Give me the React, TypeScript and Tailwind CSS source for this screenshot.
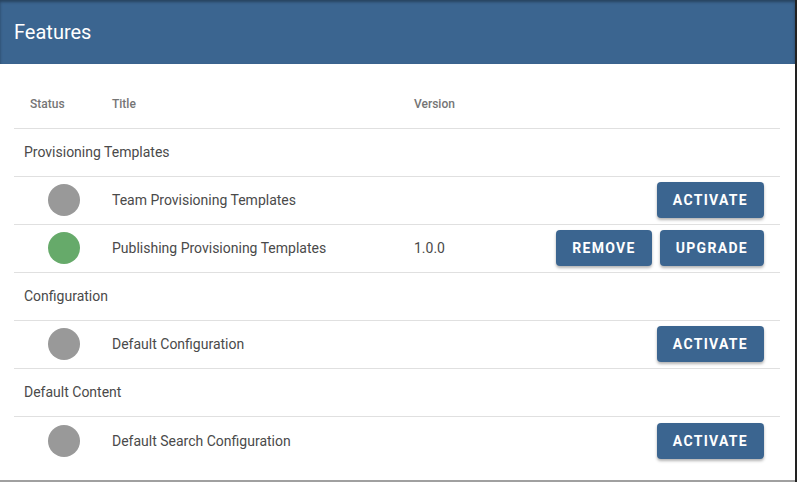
import React from 'react';

type Feature = {
  title: string;
  active: boolean;
  version?: string;
  actions: string[];
};

type Group = {
  name: string;
  features: Feature[];
};

const groups: Group[] = [
  {
    name: 'Provisioning Templates',
    features: [
      { title: 'Team Provisioning Templates', active: false, actions: ['Activate'] },
      { title: 'Publishing Provisioning Templates', active: true, version: '1.0.0', actions: ['Remove', 'Upgrade'] },
    ],
  },
  {
    name: 'Configuration',
    features: [{ title: 'Default Configuration', active: false, actions: ['Activate'] }],
  },
  {
    name: 'Default Content',
    features: [{ title: 'Default Search Configuration', active: false, actions: ['Activate'] }],
  },
];

const Button: React.FC<{ label: string }> = ({ label }) => (
  <button className="h-9 px-4 rounded bg-[#3b6590] text-white text-sm font-bold uppercase tracking-[1.3px] shadow-[0_2px_3px_rgba(0,0,0,0.3)]">
    {label}
  </button>
);

const App: React.FC = () => {
  return (
    <div className="w-[797px] h-[482px] bg-white border-r-2 border-[#222] font-['Roboto',sans-serif] overflow-hidden">
      {/* Header bar */}
      <div className="h-16 bg-[#3b6590] flex items-center px-[14px] shadow-[inset_0_2px_3px_rgba(0,0,0,0.35)]">
        <h1 className="text-white text-xl">Features</h1>
      </div>

      {/* Table */}
      <div className="pt-[17px] pb-4 px-[14px] border-b-2 border-[#a0a0a0]">
        <div className="w-[766px]">
          <div className="h-12 pb-px flex items-center border-b border-[#e0e0e0] text-xs font-medium text-[#757575]">
            <div className="w-[82px] pl-4">Status</div>
            <div className="w-[302px] pl-4">Title</div>
            <div className="pl-4">Version</div>
          </div>

          {groups.map((group, gi) => (
            <React.Fragment key={group.name}>
              <div className="h-12 pb-px flex items-center border-b border-[#e0e0e0] pl-[10px] text-sm text-[#4a4a4a]">
                {group.name}
              </div>
              {group.features.map((f, fi) => {
                const last = gi === groups.length - 1 && fi === group.features.length - 1;
                return (
                  <div
                    key={f.title}
                    className={`flex items-center text-sm text-[#4a4a4a] ${last ? 'h-[47px]' : 'h-12 pb-px border-b border-[#e0e0e0]'}`}
                  >
                    <div className="w-[82px] pl-[34px]">
                      <div className={`w-8 h-8 rounded-full ${f.active ? 'bg-[#66aa6a]' : 'bg-[#999999]'}`} />
                    </div>
                    <div className="w-[302px] pl-4">{f.title}</div>
                    <div className="w-[120px] pl-4">{f.version}</div>
                    <div className="flex-1 flex justify-end gap-2 pr-4">
                      {f.actions.map((a) => (
                        <Button key={a} label={a} />
                      ))}
                    </div>
                  </div>
                );
              })}
            </React.Fragment>
          ))}
        </div>
      </div>
    </div>
  );
};

export default App;
